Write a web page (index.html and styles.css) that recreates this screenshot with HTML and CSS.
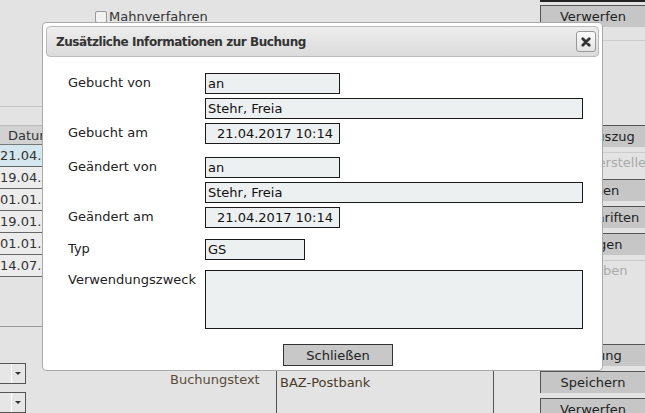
FILE: index.html
```html
<!DOCTYPE html>
<html lang="de">
<head>
<meta charset="utf-8">
<title>Buchung</title>
<link rel="stylesheet" href="styles.css">
</head>
<body>
<div class="app">
  <div class="main">
    <div class="top">
      <label class="check"><span class="box"></span>Mahnverfahren</label>
    </div>
    <div class="list">
      <div class="thead"><span class="c-date">Datum</span></div>
      <div class="row sel"><span class="c-date">21.04.2017</span></div>
      <div class="row"><span class="c-date">19.04.2017</span></div>
      <div class="row"><span class="c-date">01.01.2017</span></div>
      <div class="row"><span class="c-date">19.01.2017</span></div>
      <div class="row"><span class="c-date">01.01.2017</span></div>
      <div class="row"><span class="c-date">14.07.2016</span></div>
    </div>
    <div class="bottom">
      <div class="selects">
        <div class="select"><span class="arrow"></span></div>
        <div class="select"><span class="arrow"></span></div>
      </div>
      <div class="blabel">Buchungstext</div>
      <div class="btext">BAZ-Postbank</div>
      <div class="bcol"></div>
    </div>
  </div>
  <div class="side">
    <div class="btn first">Verwerfen</div>
    <div class="panel"><span class="dis">Buchung</span><span class="dis">kopieren</span></div>
    <div class="spacer s1"></div>
    <div class="btn">Kontoauszug</div>
    <div class="dis line">Zahlung erstellen</div>
    <div class="btn">drucken</div>
    <div class="btn">Mahnschriften</div>
    <div class="btn">anzeigen</div>
    <div class="dis line">Soll/Haben</div>
    <div class="spacer s2"></div>
    <div class="btn">Buchung</div>
    <div class="btn">Speichern</div>
    <div class="btn">Verwerfen</div>
  </div>
</div>

<div class="dialog">
  <div class="titlebar">
    <span class="title">Zusätzliche Informationen zur Buchung</span>
    <span class="close"><svg width="10" height="10" viewBox="0 0 10 10"><path d="M1.8 1.8 L8.2 8.2 M8.2 1.8 L1.8 8.2" stroke="#333" stroke-width="2.8" stroke-linecap="round"/></svg></span>
  </div>
  <div class="content">
    <div class="lbl">Gebucht von</div>
    <div class="field short">an</div>
    <div class="lbl"></div>
    <div class="field long">Stehr, Freia</div>
    <div class="lbl">Gebucht am</div>
    <div class="field short date">21.04.2017 10:14</div>

    <div class="lbl grp">Geändert von</div>
    <div class="field short grp">an</div>
    <div class="lbl"></div>
    <div class="field long">Stehr, Freia</div>
    <div class="lbl">Geändert am</div>
    <div class="field short date">21.04.2017 10:14</div>

    <div class="lbl grp2">Typ</div>
    <div class="field typ grp2">GS</div>
    <div class="lbl grp3">Verwendungszweck</div>
    <div class="field long area grp3"></div>
  </div>
  <div class="footer">
    <button class="close-btn">Schließen</button>
  </div>
</div>
</body>
</html>
```
FILE: styles.css
```css
* { box-sizing: border-box; }
html, body { margin: 0; padding: 0; }
body {
  width: 645px;
  height: 413px;
  overflow: hidden;
  background: #e3e3e3;
  font-family: "DejaVu Sans", Verdana, sans-serif;
  font-size: 13px;
  color: #222;
  position: relative;
}
.app {
  display: flex;
  height: 413px;
}
.main {
  width: 540px;
  display: flex;
  flex-direction: column;
}
.top {
  height: 107px;
  border-bottom: 1px solid #c2c2c2;
  padding: 9px 0 0 95px;
}
.check {
  display: flex;
  align-items: center;
  gap: 2px;
  font-size: 13px;
  color: #333;
}
.box {
  width: 12px;
  height: 12px;
  border: 1px solid #999;
  border-radius: 2px;
  background: #f2f2f2;
}
.list {
  height: 220px;
  padding-top: 18px;
  border-bottom: 1px solid #9a9a9a;
}
.c-date {
  display: block;
  width: 42px;
  overflow: hidden;
  white-space: nowrap;
}
.thead {
  height: 20px;
  background: #d2d2d2;
  border-top: 1px solid #bbb;
  border-bottom: 1px solid #777;
  padding-left: 8px;
  line-height: 19px;
  color: #333;
}
.thead .c-date { width: 34px; }
.row {
  height: 22px;
  line-height: 21px;
  border-bottom: 1px solid #666;
  background: #ececec;
  color: #333;
}
.row.sel { background: #d4e6ee; }
.bottom {
  flex: 1;
  display: flex;
  position: relative;
}
.selects {
  width: 170px;
  padding-top: 36px;
  display: flex;
  flex-direction: column;
  gap: 8px;
}
.select {
  width: 26px;
  height: 21px;
  border: 1px solid #555;
  border-left: none;
  background: #e6e6e6;
  position: relative;
}
.arrow {
  position: absolute;
  right: 4px;
  top: 8px;
  width: 0;
  height: 0;
  border-left: 3px solid transparent;
  border-right: 3px solid transparent;
  border-top: 3px solid #333;
}
.select::before {
  content: "";
  position: absolute;
  left: 11px;
  top: 0;
  bottom: 0;
  border-left: 1px solid #fff;
}
.blabel {
  width: 106px;
  padding-top: 45px;
  color: #5a4a3a;
}
.btext {
  width: 217px;
  margin-top: 43px;
  border-left: 1px solid #555;
  border-top: 1px solid #999;
  padding: 4px 0 0 3px;
  color: #4a3a2a;
}
.bcol {
  flex: 1;
  margin-top: 43px;
  border-left: 1px solid #555;
  border-top: 1px solid #999;
}
.side {
  width: 105px;
  display: flex;
  flex-direction: column;
  border-top: 2px solid #222;
  padding-top: 3px;
}
.btn {
  flex: none;
  height: 22px;
  margin-bottom: 5px;
  background: #c6c6c6;
  border-top: 1px solid #555;
  border-left: 1px solid #555;
  text-align: center;
  line-height: 21px;
  font-size: 13px;
  color: #222;
  white-space: nowrap;
  overflow: hidden;
}
.btn.first { height: 22px; margin-bottom: 13px; }
.panel {
  flex: none;
  height: 50px;
  display: flex;
  flex-direction: column;
  border-top: 1px solid #ccc;
  border-left: 1px solid #ccc;
  padding: 5px 0 0 4px;
  line-height: 22px;
}
.dis { color: #aaa; white-space: nowrap; }
.dis.line {
  flex: none;
  height: 22px;
  line-height: 20px;
  margin-bottom: 5px;
  text-align: center;
  border-top: 1px solid #ccc;
  overflow: hidden;
}
.spacer { flex: none; }
.s1 { height: 35px; }
.s2 { height: 57px; }

.dialog {
  position: absolute;
  left: 42px;
  top: 22px;
  width: 561px;
  height: 349px;
  background: #fff;
  border: 1px solid #aaa;
  border-radius: 4px;
  padding: 3px;
  display: flex;
  flex-direction: column;
}
.titlebar {
  height: 31px;
  border: 1px solid #bbb;
  border-radius: 4px;
  background: linear-gradient(#eeeeee, #dbdbdb);
  display: flex;
  align-items: center;
  justify-content: space-between;
  padding: 0 2px 0 9px;
}
.title {
  font-weight: bold;
  font-size: 12px;
  letter-spacing: -0.45px;
  color: #333;
}
.close {
  width: 20px;
  height: 21px;
  border: 1px solid #999;
  border-radius: 3px;
  background: linear-gradient(#fafafa, #e4e4e4);
  display: flex;
  align-items: center;
  justify-content: center;
}
.content {
  display: grid;
  grid-template-columns: 137px 1fr;
  row-gap: 4px;
  padding: 16px 0 0 22px;
  align-items: start;
}
.lbl {
  line-height: 20px;
  color: #222;
}
.field {
  height: 21px;
  border: 1px solid #1a1a1a;
  background: #edf0f0;
  padding-left: 2px;
  line-height: 19px;
  font-size: 13px;
  color: #111;
  white-space: nowrap;
}
.short { width: 135px; }
.long { width: 378px; }
.typ { width: 100px; }
.date { padding-left: 11px; }
.area { height: 59px; }
.grp { margin-top: 9px; }
.grp2 { margin-top: 7px; }
.grp3 { margin-top: 6px; }
.footer {
  padding: 15px 0 0 237px;
}
.close-btn {
  width: 110px;
  height: 22px;
  border: 1px solid #333;
  background: #c8c8c8;
  font-family: "DejaVu Sans", Verdana, sans-serif;
  font-size: 13px;
  color: #222;
  padding: 0;
}
```
